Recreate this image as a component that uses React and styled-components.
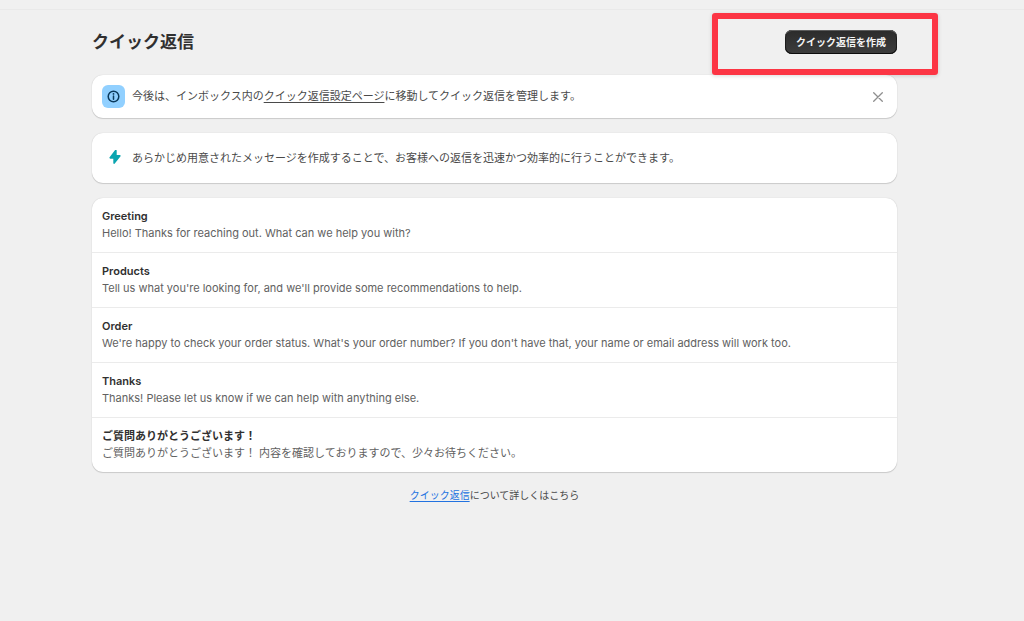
import React from "react";
import styled, { createGlobalStyle } from "styled-components";

const replies = [
  { title: "Greeting", body: "Hello! Thanks for reaching out. What can we help you with?" },
  { title: "Products", body: "Tell us what you're looking for, and we'll provide some recommendations to help." },
  {
    title: "Order",
    body: "We're happy to check your order status. What's your order number? If you don't have that, your name or email address will work too.",
  },
  { title: "Thanks", body: "Thanks! Please let us know if we can help with anything else." },
  {
    title: "ご質問ありがとうございます！",
    body: "ご質問ありがとうございます！ 内容を確認しておりますので、少々お待ちください。",
  },
];

const InfoIcon = () => (
  <svg width="13" height="13" viewBox="0 0 13 13" fill="none" stroke="#0b3a5c" aria-hidden="true">
    <circle cx="6.5" cy="6.5" r="5.3" strokeWidth="1.5" />
    <path d="M6.5 6v3.3" strokeWidth="1.5" strokeLinecap="round" />
    <circle cx="6.5" cy="3.9" r="0.9" fill="#0b3a5c" stroke="none" />
  </svg>
);

const BoltIcon = () => (
  <svg width="12" height="16" viewBox="0 1 12 16" fill="#0aa5b0" aria-hidden="true">
    <path d="M6.1 1.1C6.7.4 7.7.8 7.7 1.7V6h3c.8 0 1.2.9.7 1.5l-5.6 7.1c-.5.7-1.5.3-1.5-.6V9.7h-3C.5 9.7.1 8.8.6 8.2z" />
  </svg>
);

const CloseIcon = () => (
  <svg width="10" height="10" viewBox="0 0 10 10" fill="none" stroke="#8f8f8f" aria-hidden="true">
    <path d="M.7.7l8.6 8.6M9.3.7L.7 9.3" strokeWidth="1.3" strokeLinecap="round" />
  </svg>
);

export default function App() {
  return (
    <>
      <GlobalStyle />
      <TopBar />
      <Page>
        <Header>
          <Title>クイック返信</Title>
          <CreateButton type="button">クイック返信を作成</CreateButton>
          <Highlight />
        </Header>
        <Banner>
          <InfoBadge>
            <InfoIcon />
          </InfoBadge>
          <Message>
            今後は、インボックス内の<BannerLink href="#settings">クイック返信設定ページ</BannerLink>
            に移動してクイック返信を管理します。
          </Message>
          <CloseButton type="button" aria-label="閉じる">
            <CloseIcon />
          </CloseButton>
        </Banner>
        <Tip>
          <TipIcon>
            <BoltIcon />
          </TipIcon>
          <Message>
            あらかじめ用意されたメッセージを作成することで、お客様への返信を迅速かつ効率的に行うことができます。
          </Message>
        </Tip>
        <ReplyList>
          {replies.map((reply) => (
            <ReplyItem key={reply.title}>
              <ReplyTitle>{reply.title}</ReplyTitle>
              <ReplyBody>{reply.body}</ReplyBody>
            </ReplyItem>
          ))}
        </ReplyList>
        <Footer>
          <FooterLink href="#learn-more">クイック返信</FooterLink>について詳しくはこちら
        </Footer>
      </Page>
    </>
  );
}

const GlobalStyle = createGlobalStyle`
  * {
    box-sizing: border-box;
  }

  body {
    margin: 0;
    background: #f0f0f0;
    color: #303030;
    font-family: Inter, "Noto Sans CJK JP", sans-serif;
    font-size: 11px;
    line-height: 17px;
  }
`;

const TopBar = styled.div`
  height: 10px;
  border-bottom: 1px solid #e9e9e9;
`;

const Page = styled.main`
  padding: 20px 127px 20px 92px;
`;

const Header = styled.header`
  position: relative;
  display: flex;
  align-items: center;
  justify-content: space-between;
  height: 24px;
  margin-bottom: 21px;
`;

const Title = styled.h1`
  margin: 0;
  font-size: 17px;
  font-weight: 600;
  line-height: 24px;
`;

const CreateButton = styled.button`
  height: 24px;
  padding: 0 11px 2px;
  border: 0;
  border-radius: 7px;
  background: linear-gradient(#2b2b2b, #3d3d3d);
  box-shadow: inset 0 1px 0 #5c5c5c, inset 0 -1px 0 #0c0c0c, inset 1px 0 0 #1c1c1c, inset -1px 0 0 #1c1c1c;
  color: #f4f4f4;
  font-family: inherit;
  font-size: 10px;
  font-weight: 700;
  cursor: pointer;
`;

/* annotation frame drawn over the create button */
const Highlight = styled.div`
  position: absolute;
  z-index: 1;
  top: -17px;
  right: -41px;
  width: 226px;
  height: 62px;
  border: 6px solid #fc3544;
  border-radius: 3px;
  box-shadow: 0 1px 4px rgba(0, 0, 0, 0.15);
  pointer-events: none;
`;

const Card = styled.section`
  margin-bottom: 15px;
  border-radius: 11px;
  background: #fff;
  box-shadow: 0 1px 1px rgba(0, 0, 0, 0.14), 0 0 1px rgba(0, 0, 0, 0.22);
`;

const Banner = styled(Card)`
  display: flex;
  align-items: center;
  gap: 7px;
  padding: 10px;
`;

const Tip = styled(Card)`
  display: flex;
  align-items: flex-start;
  gap: 7px;
  padding: 17px 10px 16px;
`;

const InfoBadge = styled.span`
  display: flex;
  align-items: center;
  justify-content: center;
  width: 23px;
  height: 23px;
  border-radius: 6px;
  background: #91d0ff;
`;

const TipIcon = styled.span`
  display: flex;
  justify-content: flex-end;
  width: 23px;
  padding-right: 4px;
`;

const Message = styled.p`
  flex: 1;
  margin: 0;
  color: #4a4a4a;
`;

const BannerLink = styled.a`
  color: inherit;
  text-underline-offset: 2px;
`;

const CloseButton = styled.button`
  display: flex;
  align-items: center;
  justify-content: center;
  width: 18px;
  height: 18px;
  padding: 0;
  border: 0;
  background: none;
  cursor: pointer;
`;

const ReplyList = styled(Card).attrs({ as: "ul" })`
  margin-top: 0;
  padding: 0;
  list-style: none;
`;

const ReplyItem = styled.li`
  padding: 10px;

  & + & {
    border-top: 1px solid #ebebeb;
  }
`;

const ReplyTitle = styled.h2`
  margin: 0;
  font-size: 11px;
  font-weight: 600;
  line-height: 17px;
`;

const ReplyBody = styled.p`
  margin: 0;
  color: #616161;
`;

const Footer = styled.p`
  margin: 0;
  color: #4a4a4a;
  font-size: 10px;
  text-align: center;
`;

const FooterLink = styled.a`
  color: #2272e0;
  text-underline-offset: 2px;
`;
